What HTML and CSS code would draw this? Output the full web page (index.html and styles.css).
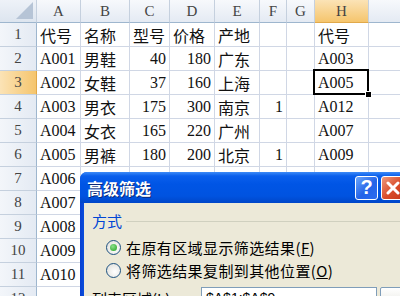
FILE: index.html
```html
<!DOCTYPE html>
<html>
<head>
<meta charset="utf-8">
<link rel="stylesheet" href="styles.css">
</head>
<body>
<div class="sheet">
  <div class="grid">
    <div class="hd corner"><span class="tri"></span></div>
    <div class="hd">A</div><div class="hd">B</div><div class="hd">C</div><div class="hd">D</div><div class="hd">E</div><div class="hd">F</div><div class="hd">G</div><div class="hd on">H</div><div class="hd"></div>

    <div class="rh">1</div><div class="c">代号</div><div class="c">名称</div><div class="c">型号</div><div class="c">价格</div><div class="c">产地</div><div class="c"></div><div class="c"></div><div class="c">代号</div><div class="c"></div>
    <div class="rh">2</div><div class="c">A001</div><div class="c">男鞋</div><div class="c n">40</div><div class="c n">180</div><div class="c">广东</div><div class="c"></div><div class="c"></div><div class="c">A003</div><div class="c"></div>
    <div class="rh on">3</div><div class="c">A002</div><div class="c">女鞋</div><div class="c n">37</div><div class="c n">160</div><div class="c">上海</div><div class="c"></div><div class="c"></div><div class="c sel">A005<span class="handle"></span></div><div class="c"></div>
    <div class="rh">4</div><div class="c">A003</div><div class="c">男衣</div><div class="c n">175</div><div class="c n">300</div><div class="c">南京</div><div class="c n">1</div><div class="c"></div><div class="c">A012</div><div class="c"></div>
    <div class="rh">5</div><div class="c">A004</div><div class="c">女衣</div><div class="c n">165</div><div class="c n">220</div><div class="c">广州</div><div class="c"></div><div class="c"></div><div class="c">A007</div><div class="c"></div>
    <div class="rh">6</div><div class="c">A005</div><div class="c">男裤</div><div class="c n">180</div><div class="c n">200</div><div class="c">北京</div><div class="c n">1</div><div class="c"></div><div class="c">A009</div><div class="c"></div>
    <div class="rh">7</div><div class="c">A006</div><div class="c"></div><div class="c"></div><div class="c"></div><div class="c"></div><div class="c"></div><div class="c"></div><div class="c"></div><div class="c"></div>
    <div class="rh">8</div><div class="c">A007</div><div class="c"></div><div class="c"></div><div class="c"></div><div class="c"></div><div class="c"></div><div class="c"></div><div class="c"></div><div class="c"></div>
    <div class="rh">9</div><div class="c">A008</div><div class="c"></div><div class="c"></div><div class="c"></div><div class="c"></div><div class="c"></div><div class="c"></div><div class="c"></div><div class="c"></div>
    <div class="rh">10</div><div class="c">A009</div><div class="c"></div><div class="c"></div><div class="c"></div><div class="c"></div><div class="c"></div><div class="c"></div><div class="c"></div><div class="c"></div>
    <div class="rh">11</div><div class="c">A010</div><div class="c"></div><div class="c"></div><div class="c"></div><div class="c"></div><div class="c"></div><div class="c"></div><div class="c"></div><div class="c"></div>
    <div class="rh">12</div><div class="c"></div><div class="c"></div><div class="c"></div><div class="c"></div><div class="c"></div><div class="c"></div><div class="c"></div><div class="c"></div><div class="c"></div>
  </div>

  <div class="dialog">
    <div class="titlebar">
      <span class="title">高级筛选</span>
      <span class="tbtn help">?</span>
      <span class="tbtn close">
        <svg width="14" height="14" viewBox="0 0 14 14"><path d="M2 2 L12 12 M12 2 L2 12" stroke="#fff" stroke-width="3" stroke-linecap="round"/></svg>
      </span>
    </div>
    <div class="dbody">
      <div class="ghead"><span class="glabel">方式</span><span class="gline"></span></div>
      <div class="opt first"><span class="radio checked"></span><span class="otext">在原有区域显示筛选结果(<u>F</u>)</span></div>
      <div class="opt"><span class="radio"></span><span class="otext">将筛选结果复制到其他位置(<u>O</u>)</span></div>
      <div class="field">
        <span class="flabel">列表区域(<u>L</u>):</span>
        <span class="finput">$A$1:$A$9</span>
        <span class="fbtn"></span>
      </div>
    </div>
  </div>
</div>
</body>
</html>
```

FILE: styles.css
```css
html, body {
  margin: 0;
  padding: 0;
  background: #ffffff;
  overflow: hidden;
}
.sheet {
  position: relative;
  width: 400px;
  height: 296px;
  overflow: hidden;
}
.grid {
  display: grid;
  grid-template-columns: 37px 44px 49px 40px 45px 45px 27px 28px 54px 40px;
  grid-template-rows: 23px repeat(12, 24px);
  font-family: "Liberation Serif", "Noto Sans CJK SC", serif;
}
.hd {
  box-sizing: border-box;
  background: linear-gradient(#f7f9fc, #e4eaf3);
  border-right: 1px solid #c5d0de;
  border-bottom: 1px solid #9eb6ce;
  color: #444;
  font-size: 15px;
  display: flex;
  align-items: center;
  justify-content: center;
}
.hd.on {
  background: linear-gradient(#fbe3b6, #f5c56d);
  border-bottom-color: #e1a94a;
}
.corner {
  position: relative;
  background: linear-gradient(#eef2f8, #dde5ef);
}
.tri {
  position: absolute;
  right: 3px;
  bottom: 3px;
  width: 0;
  height: 0;
  border-left: 17px solid transparent;
  border-bottom: 17px solid #b6c4d6;
}
.rh {
  box-sizing: border-box;
  background: linear-gradient(90deg, #f3f6fa, #e4eaf3);
  border-right: 1px solid #9eb6ce;
  border-bottom: 1px solid #c5d0de;
  color: #444;
  font-size: 15px;
  display: flex;
  align-items: center;
  justify-content: center;
}
.rh.on {
  background: linear-gradient(90deg, #fbe3b6, #f5c56d);
  border-right-color: #e1a94a;
}
.c {
  box-sizing: border-box;
  border-right: 1px solid #d0d7e5;
  border-bottom: 1px solid #d0d7e5;
  color: #111;
  font-size: 16px;
  display: flex;
  align-items: center;
  padding: 1px 2px 0 3px;
  white-space: nowrap;
}
.c.n {
  justify-content: flex-end;
  padding-right: 3px;
}
.sel {
  position: relative;
}
.sel::after {
  content: "";
  position: absolute;
  left: -2px;
  top: -2px;
  right: -1px;
  bottom: -1px;
  border: 2px solid #000;
}
.handle {
  position: absolute;
  right: -4px;
  bottom: -4px;
  width: 5px;
  height: 5px;
  background: #000;
  border: 1px solid #fff;
  z-index: 2;
}

.dialog {
  position: absolute;
  left: 80px;
  top: 172px;
  width: 340px;
  height: 140px;
  box-sizing: border-box;
  border-radius: 7px 7px 0 0;
  background: linear-gradient(90deg, #0840d0, #0a5ae8 8px);
  padding: 0 0 0 4px;
  font-family: "Noto Sans CJK SC", "Liberation Sans", sans-serif;
}
.titlebar {
  height: 31px;
  display: flex;
  align-items: center;
  margin-left: -4px;
  padding-left: 7px;
  border-radius: 7px 7px 0 0;
  background: linear-gradient(#3d8bf7 0px, #0a5fec 4px, #0055e5 12px, #0053e0 24px, #0046c8 31px);
}
.title {
  color: #fff;
  font-size: 16px;
  font-weight: bold;
  text-shadow: 1px 1px 0 #0a2a7a;
  width: 268px;
  flex: none;
  line-height: 1;
}
.tbtn {
  width: 23px;
  height: 24px;
  box-sizing: border-box;
  border: 1px solid #fff;
  border-radius: 3px;
  display: flex;
  align-items: center;
  justify-content: center;
  margin-right: 3px;
  flex: none;
}
.help {
  background: linear-gradient(135deg, #6aa6fb, #2463e8 55%, #2c6cf0);
  color: #fff;
  font-family: "Liberation Sans", sans-serif;
  font-weight: bold;
  font-size: 20px;
}
.close {
  background: linear-gradient(135deg, #ee9a7e, #d94c2a 55%, #c73a1a);
}
.dbody {
  background: #ece9d8;
  height: 110px;
  padding: 8px 0 0 4px;
  box-sizing: border-box;
}
.ghead {
  display: flex;
  align-items: center;
  height: 20px;
}
.glabel {
  color: #0046d5;
  font-size: 15px;
  line-height: 20px;
  padding-left: 4px;
  margin-right: 4px;
}
.gline {
  flex: 1;
  height: 1px;
  background: #d0d0bf;
  margin-top: 1px;
}
.opt {
  display: flex;
  align-items: center;
  height: 23px;
  margin-left: 18px;
  font-size: 15px;
  color: #000;
  white-space: nowrap;
}
.otext {
  letter-spacing: 0.4px;
}
.opt.first {
  margin-top: 5px;
}
.radio {
  width: 13px;
  height: 13px;
  border-radius: 50%;
  border: 1px solid #1c5180;
  background: radial-gradient(circle at 60% 60%, #ffffff, #dcdcd6);
  margin-right: 5px;
  position: relative;
  flex: none;
}
.radio.checked::after {
  content: "";
  position: absolute;
  left: 3px;
  top: 3px;
  width: 7px;
  height: 7px;
  border-radius: 50%;
  background: radial-gradient(circle at 40% 35%, #8be08b, #21a121);
}
.field {
  display: flex;
  align-items: flex-start;
  margin-top: 5px;
  font-size: 15px;
}
.flabel {
  width: 109px;
  padding-left: 4px;
  line-height: 20px;
  padding-top: 2px;
}
.finput {
  width: 176px;
  height: 22px;
  box-sizing: border-box;
  background: #fff;
  border: 1px solid #7f9db9;
  font-family: "Liberation Sans", sans-serif;
  font-size: 14px;
  padding-left: 4px;
  line-height: 20px;
}
.fbtn {
  width: 24px;
  height: 22px;
  margin-left: 3px;
  border: 1px solid #7f9db9;
  border-radius: 2px;
  background: linear-gradient(#fff, #e3e3db);
}
```
